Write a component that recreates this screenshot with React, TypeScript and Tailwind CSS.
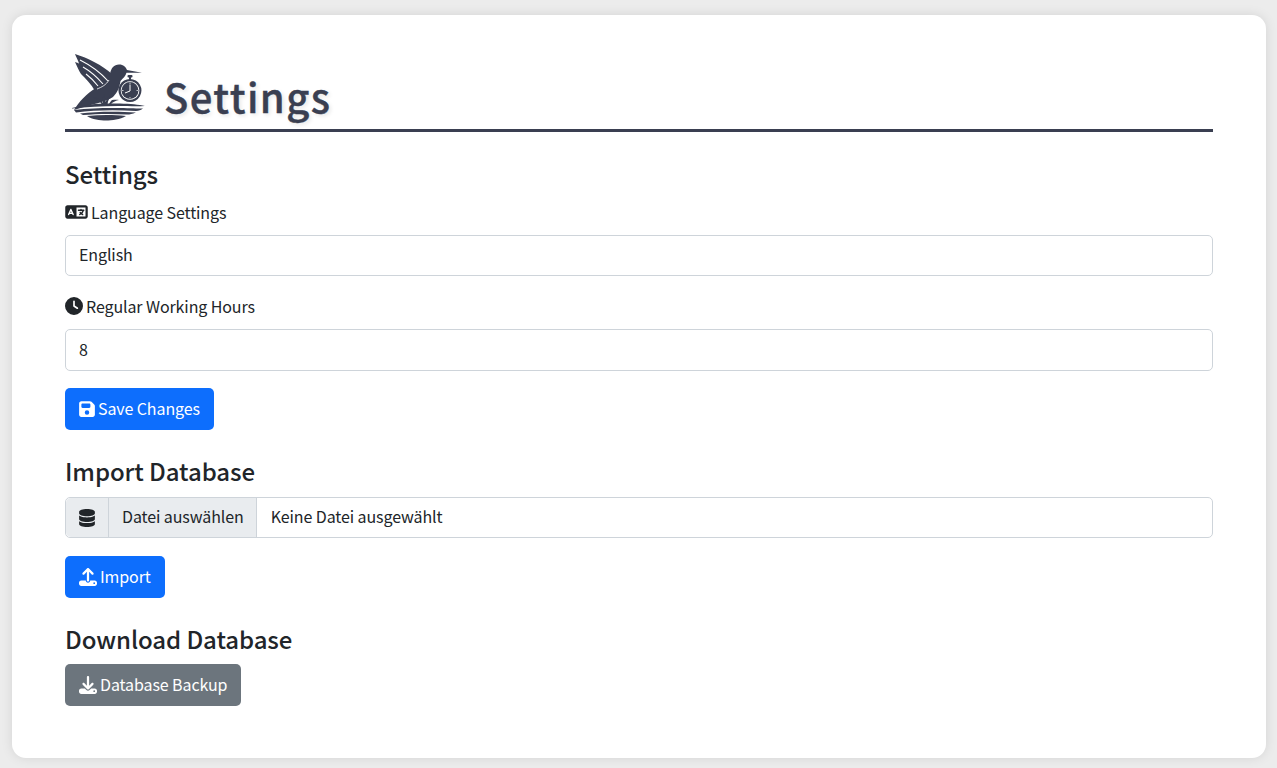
import { FaClock, FaDatabase, FaDownload, FaFloppyDisk, FaLanguage, FaUpload } from "react-icons/fa6";

function Logo() {
  return (
    <svg width="75" height="72" viewBox="70 50 75 72" className="shrink-0">
      <g fill="#3a3f51">
        {/* wing */}
        <path d="M75 54 C88 58 102 65 112 74 C114 80 112 86 106 90 L95 91 C91 84 86 79 81 74 C79 71 77 66 75 62 C77 62.500 78 63 79 63.500 C78 60 76 57 75 54Z" />
        {/* body and tail */}
        <path d="M119 64.500 C123.500 64.500 126 67 127 70 L142 72.800 L126.500 72.800 C125.500 76 123.500 78 120.500 81 C119.500 87 118 92 113 97 C106 102 92 104 74 110 C79 102 86 94 96 88 C106 86 109 80 110 74 C111 68 114 64.500 119 64.500Z" />
        {/* grass */}
        <path d="M93 97 C98 98 101 100 103 103 C102.500 99 103 96 104 94 C105 97 105.500 99 105.500 102 C107 98 110 95 113 93 C110 97 108 100 107.500 104 L102 104.500 C100 101 97 99 93 97Z" />
        <path d="M112 100 C115 99.500 117 99.500 119 100 C116 100.500 113 102 111 104 L109 104 C110 102 111 101 112 100Z" />
        {/* clock */}
        <rect x="127.500" y="75" width="5" height="2.500" rx="1" />
        <rect x="129" y="77" width="2" height="3" />
        <path fillRule="evenodd" d="M130 79 A11.500 11.500 0 1 1 129.900 79Z M130 81.200 A9.300 9.300 0 1 0 130.100 81.200Z" />
        <circle cx="130" cy="90.500" r="8.500" />
        <path d="M130 84.500 L130 91 L125 93" fill="none" stroke="#ffffff" strokeWidth="1" />
        <path d="M130 82.500 V84 M130 97 V98.500 M122 90.500 H123.500 M136.500 90.500 H138" stroke="#ffffff" strokeWidth="0.7" />
        {/* ground */}
        <path d="M72 108 C86 104 100 103 120 103.500 C130 103.800 139 104.500 145 106 C136 106.500 128 106 118 106 C102 106 86 107 72 108.500Z" />
        <path d="M74 110 C90 108 106 107.800 120 108 C130 108.200 138 108.500 143 108.500 C141 110 139 111 136 111 C116 109.800 94 110 76 112.500Z" />
        <path d="M80 113.500 C96 111.500 118 111.500 136 112.500 C132 114 130 114.500 127 114.500 C112 113.500 96 113.800 83 115Z" />
        <path d="M87 116 C100 114.800 114 114.800 126 116 C120 119.500 112 120.500 106 120.500 C100 120.500 92 119.500 87 116Z" />
      </g>
      {/* wing stripes */}
      <g fill="none" stroke="#ffffff" strokeWidth="1.100">
        <path d="M80 60 C90 65 100 72 108 81" />
        <path d="M83 67 C90 71 97 77 103 84" />
        <path d="M86 74 C90 77 94 81 98 86" />
      </g>
      <path d="M97 89 C102 87 106 85 109 80" fill="none" stroke="#ffffff" strokeWidth="0.800" />
    </svg>
  );
}

const inputClass =
  "w-full px-[13px] pb-[3px] bg-white border border-[#ced4da] rounded-[5px] flex items-center";

export default function App() {
  return (
    <div
      className="min-h-[768px] bg-[#ececec] pt-[15px] pl-[12px] pr-[11px] text-[16px] text-[#212529] tracking-[-0.1px]"
      style={{ fontFamily: '"Noto Sans CJK JP", "Noto Sans", sans-serif' }}
    >
      <div className="h-[743px] bg-white rounded-[14px] shadow-[0_0_12px_rgba(0,0,0,0.1)] px-[53px] pt-[37px]">
        <div className="flex items-end h-[80px] border-b-[3px] border-[#3a3f51]">
          <div className="mb-[7px] ml-[5px]">
            <Logo />
          </div>
          <h1 className="ml-[19px] mb-[3px] text-[40px] leading-[60px] font-medium tracking-[1.4px] text-[#3a3f51] [-webkit-text-stroke:0.4px_#3a3f51] [text-shadow:2px_2px_4px_rgba(0,0,0,0.1)]">
            Settings
          </h1>
        </div>

        <h2 className="mt-[24px] text-[24px] leading-[36px] font-medium tracking-[-0.08px]">Settings</h2>
        <label className="mt-[8px] h-[24px] flex items-center gap-[3px]">
          <FaLanguage className="w-[23px] h-[18px]" />
          Language Settings
        </label>
        <div className={inputClass + " mt-[11px] h-[41px]"}>English</div>

        <label className="mt-[18px] h-[24px] flex items-center gap-[3px]">
          <FaClock className="w-[18px] h-[18px]" />
          Regular Working Hours
        </label>
        <div className={inputClass + " mt-[11px] h-[42px]"}>8</div>

        <button className="mt-[17px] h-[42px] px-[14px] pb-[2px] rounded-[5px] bg-[#0d6efd] text-white flex items-center gap-[3px]">
          <FaFloppyDisk className="w-[16px] h-[18px] mt-[2px]" />
          Save Changes
        </button>

        <h2 className="mt-[23px] text-[24px] leading-[36px] font-medium tracking-[-0.08px]">Import Database</h2>
        <div className="mt-[8px] h-[41px] flex border border-[#ced4da] rounded-[5px]">
          <div className="w-[43px] flex items-center justify-center bg-[#e9ecef] border-r border-[#ced4da] rounded-l-[5px]">
            <FaDatabase className="w-[16px] h-[18px]" />
          </div>
          <div className="pl-[13px] pr-[12px] pb-[3px] flex items-center bg-[#e9ecef] border-r border-[#ced4da]">
            Datei auswählen
          </div>
          <div className="px-[14px] pb-[3px] flex items-center">Keine Datei ausgewählt</div>
        </div>

        <button className="mt-[18px] h-[42px] px-[14px] pb-[2px] rounded-[5px] bg-[#0d6efd] text-white flex items-center gap-[3px]">
          <FaUpload className="w-[18px] h-[18px] mt-[2px]" />
          Import
        </button>

        <h2 className="mt-[23px] text-[24px] leading-[36px] font-medium tracking-[-0.08px]">Download Database</h2>
        <button className="mt-[7px] h-[42px] px-[14px] pb-[2px] rounded-[5px] bg-[#6c757d] text-white flex items-center gap-[3px]">
          <FaDownload className="w-[18px] h-[18px] mt-[2px]" />
          Database Backup
        </button>
      </div>
    </div>
  );
}
